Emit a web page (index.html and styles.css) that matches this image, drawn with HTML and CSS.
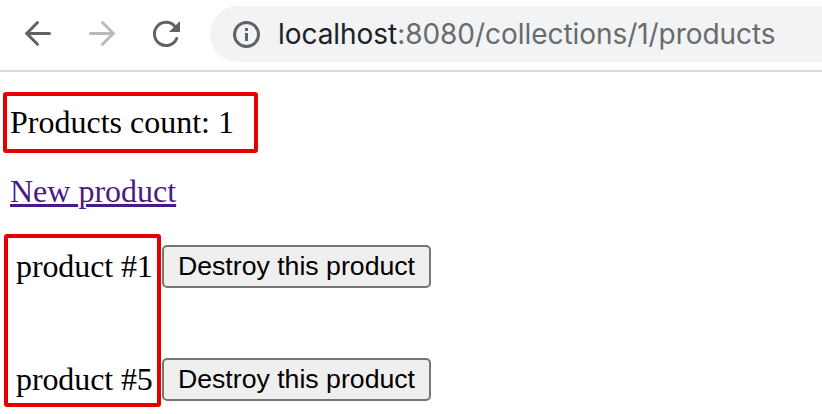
FILE: index.html
```html
<!DOCTYPE html>
<html lang="en">
<head>
<meta charset="utf-8">
<title>Products</title>
<link rel="stylesheet" href="styles.css">
</head>
<body>
<header class="toolbar">
  <svg class="nav" width="210" height="70" viewBox="0 0 210 70" fill="none" stroke-width="3" stroke-linecap="round">
    <path class="back" d="M49.5 33.5H27M37.5 22.5L26.7 33.5L37.5 44.3"/>
    <path class="forward" d="M90.5 33.5H113M102.5 22.5L113.3 33.5L102.5 44.3"/>
    <path class="reload" d="M174.5 26A11.6 11.6 0 1 0 176.7 38.5"/>
    <path class="reload-tip" d="M180 21V32H169Z"/>
  </svg>
  <div class="address">
    <svg width="28" height="28" viewBox="0 0 28 28" fill="none" stroke="#5f6368" stroke-width="3">
      <circle cx="14.5" cy="14.5" r="12"/>
      <path d="M14.5 13V21M14.5 8V11"/>
    </svg>
    <div class="url"><span class="host">localhost</span><span class="path">:8080/collections/1/products</span></div>
  </div>
</header>
<main>
  <div class="count">Products count: 1</div>
  <a class="new" href="#">New product</a>
  <div class="products">
    <div class="names"><div>product #1</div><div>product #5</div></div>
    <div class="actions">
      <button>Destroy this product</button>
      <button>Destroy this product</button>
    </div>
  </div>
</main>
</body>
</html>
```
FILE: styles.css
```css
* { box-sizing: border-box; }
body {
  margin: 0;
  height: 414px;
  overflow: hidden;
  background: #fff;
  color: #000;
  font: 32px/36px "Liberation Serif", "Times New Roman", serif;
}
.toolbar {
  display: flex;
  height: 72px;
  border-bottom: 2px solid #dadada;
}
.nav { flex: none; }
.back, .reload { stroke: #5f6368; }
.forward { stroke: #bababa; }
.reload-tip { fill: #5f6368; }
.address {
  flex: 1;
  display: flex;
  align-items: center;
  height: 56px;
  margin-top: 6px;
  padding-left: 22px;
  border-radius: 28px 0 0 28px;
  background: #f1f3f4;
}
.url {
  margin-left: 18px;
  font: 28px/40px Inter, sans-serif;
  letter-spacing: -0.05px;
  white-space: nowrap;
}
.host { color: #202124; }
.path { color: #6a6b6d; }
main { padding: 20px 0 0 3px; }
.count {
  width: 255px;
  height: 61px;
  padding: 8px 0 0 3px;
  border: 4px solid #e60000;
  border-radius: 3px;
}
.new {
  display: block;
  width: max-content;
  margin: 20px 0 0 7px;
  color: #4b1a88;
  text-decoration-thickness: 3px;
  text-underline-offset: 2px;
}
.products {
  display: flex;
  margin: 25px 0 0 1px;
}
.names {
  display: flex;
  flex-direction: column;
  gap: 77px;
  width: 157px;
  height: 173px;
  padding: 10px 0 0 8px;
  border: 4px solid #e60000;
  border-radius: 3px;
  letter-spacing: -0.1px;
  white-space: nowrap;
}
.actions {
  display: flex;
  flex-direction: column;
  gap: 70px;
  padding: 11px 0 0 1px;
}
button {
  width: 269px;
  height: 43px;
  padding: 0 0 2px;
  border: 2px solid #767676;
  border-radius: 5px;
  background: #efefef;
  color: #000;
  font: 26.67px/36px "Liberation Sans", Arial, sans-serif;
}
```
